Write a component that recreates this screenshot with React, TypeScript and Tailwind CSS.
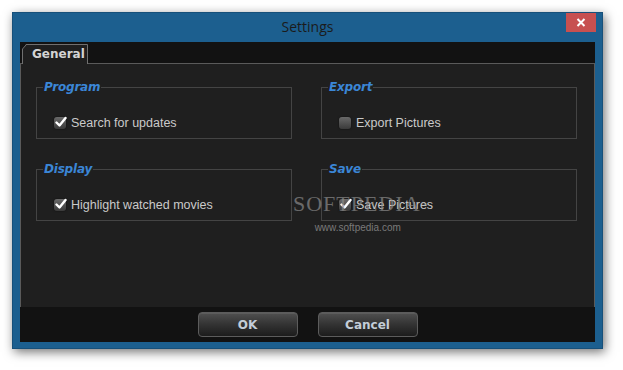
import React from "react";

const font = { fontFamily: "Tahoma, 'DejaVu Sans', 'Liberation Sans', sans-serif" };

function Check({ checked }: { checked: boolean }) {
  return (
    <span className="relative inline-flex w-[12px] h-[12px] rounded-[3px] bg-gradient-to-b from-[#6a6a6a] to-[#3a3a3a] shadow-[0_0_2px_rgba(0,0,0,0.6)] items-center justify-center">
      {checked && (
        <svg width="12" height="12" viewBox="0 0 12 12" className="absolute left-[1px] top-[-1px]">
          <path d="M1.5 6.5 L4.5 9.5 L10.5 2" fill="none" stroke="#ffffff" strokeWidth="2.4" strokeLinecap="round" strokeLinejoin="round" />
        </svg>
      )}
    </span>
  );
}

function Group({ title, label, checked }: { title: string; label: string; checked: boolean }) {
  return (
    <div className="relative h-[52px] border border-[#444444]">
      <span
        className="absolute left-[6px] top-[-9px] bg-[#1f1f1f] px-[1px] text-[12px] font-bold italic leading-[17px] text-[#3b86d6]"
        style={{ fontFamily: "'DejaVu Sans', Verdana, sans-serif", letterSpacing: "-0.2px" }}
      >
        {title}
      </span>
      <div className="flex items-center gap-[5px] pl-[17px] pt-[28px]">
        <Check checked={checked} />
        <span className="text-[12.5px] leading-[14px] text-[#cacaca]" style={{ fontFamily: "'Liberation Sans', Arial, sans-serif" }}>
          {label}
        </span>
      </div>
    </div>
  );
}

function Btn({ children }: { children: React.ReactNode }) {
  return (
    <button
      className="w-[100px] h-[25px] rounded-[4px] border border-[#5c5c5c] bg-gradient-to-b from-[#505050] via-[#333333] to-[#1c1c1c] text-[12px] font-bold text-[#c3cdd8] shadow-[inset_0_1px_0_rgba(255,255,255,0.08)]"
      style={{ fontFamily: "'DejaVu Sans', Verdana, sans-serif" }}
    >
      {children}
    </button>
  );
}

export default function App() {
  return (
    <div className="w-[623px] h-[370px] bg-white pl-[12px] pt-[12px]" style={font}>
      <div className="w-[591px] h-[337px] bg-[#1c5f8f] border border-[#17507a] shadow-[2px_3px_10px_rgba(0,0,0,0.55)] flex flex-col">
        <div className="relative h-[29px] flex items-center justify-center">
          <span className="text-[14px] text-[#1b1b1b] mb-[2px]" style={{ fontFamily: "'Open Sans', 'Liberation Sans', sans-serif" }}>
            Settings
          </span>
          <div className="absolute right-[6px] top-0 w-[30px] h-[19px] bg-[#c75050] flex items-center justify-center">
            <svg width="10" height="9" viewBox="0 0 10 9">
              <path d="M1.5 1 L8.5 8 M8.5 1 L1.5 8" stroke="#ffffff" strokeWidth="2" />
            </svg>
          </div>
        </div>
        <div className="mx-[7px] h-[300px] flex flex-col">
          <div className="h-[21px] bg-[#121212] flex items-end pl-[2px] relative z-10">
            <div className="relative w-[66px] h-[20px] mb-[-1px] flex items-center">
              <svg width="66" height="20" viewBox="0 0 66 20" className="absolute inset-0">
                <path d="M0.5 20 L0.5 5 L4 1 L4 0.5 L65.5 0.5 L65.5 20" fill="#1f1f1f" stroke="#707070" strokeWidth="1" />
              </svg>
              <span className="relative pl-[10px] text-[12px] font-bold text-[#d4d4d4]" style={{ fontFamily: "'DejaVu Sans', Verdana, sans-serif" }}>
                General
              </span>
            </div>
          </div>
          <div className="relative h-[244px] bg-[#1f1f1f] border-t border-l border-r border-[#5a5a5a]">
            <div className="grid grid-cols-[256px_256px] gap-x-[29px] gap-y-[30px] pl-[15px] pt-[23px]">
              <Group title="Program" label="Search for updates" checked />
              <Group title="Export" label="Export Pictures" checked={false} />
              <Group title="Display" label="Highlight watched movies" checked />
              <Group title="Save" label="Save Pictures" checked />
            </div>
            <div className="pointer-events-none absolute left-[272px] top-[129px] flex flex-col items-center">
              <span className="text-[22px] leading-[22px] text-[#8a8a8a] opacity-70 tracking-[1px]" style={{ fontFamily: "'Liberation Serif', serif" }}>
                SOFTPEDIA<sup className="text-[7px]">™</sup>
              </span>
              <span className="mt-[8px] mr-[6px] text-[10px] leading-[10px] text-[#7a7a7a]" style={{ fontFamily: "'Liberation Sans', sans-serif" }}>
                www.softpedia.com
              </span>
            </div>
          </div>
          <div className="h-[35px] bg-[#121212] flex justify-center gap-[20px] pt-[5px]">
            <Btn>OK</Btn>
            <Btn>Cancel</Btn>
          </div>
        </div>
      </div>
    </div>
  );
}
